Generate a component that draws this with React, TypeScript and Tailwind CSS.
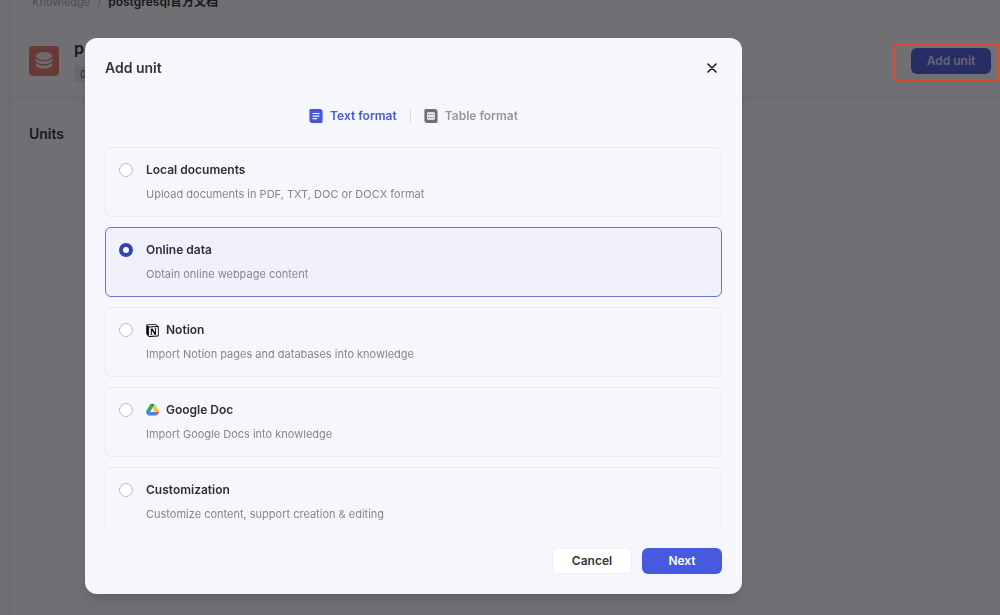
import { useState, type ReactNode } from 'react'
import { SiNotion } from 'react-icons/si'

function GoogleDriveIcon() {
  return (
    <svg viewBox="0 0 87.3 78" className="w-[13px]" aria-hidden="true">
      <path fill="#3f7ae0" d="m6.6 66.85 3.85 6.65c.8 1.4 1.95 2.5 3.3 3.3l13.75-23.8h-27.5c0 1.55.4 3.1 1.2 4.5z" />
      <path fill="#3fa55a" d="m43.65 25-13.75-23.8c-1.35.8-2.5 1.9-3.3 3.3l-25.4 44a9.06 9.06 0 0 0 -1.2 4.5h27.5z" />
      <path fill="#e0523f" d="m73.55 76.8c1.35-.8 2.5-1.9 3.3-3.3l1.6-2.75 7.65-13.25c.8-1.4 1.2-2.95 1.2-4.5h-27.502l5.852 11.5z" />
      <path fill="#2c8443" d="m43.65 25 13.75-23.8c-1.35-.8-2.9-1.2-4.5-1.2h-18.5c-1.6 0-3.15.45-4.5 1.2z" />
      <path fill="#3f7ff0" d="m59.8 53h-32.3l-13.75 23.8c1.35.8 2.9 1.2 4.5 1.2h50.8c1.6 0 3.15-.45 4.5-1.2z" />
      <path fill="#f5c03c" d="m73.4 26.5-12.7-22c-.8-1.4-1.95-2.5-3.3-3.3l-13.75 23.8 16.15 28h27.45c0-1.55-.4-3.1-1.2-4.5z" />
    </svg>
  )
}

function TextFormatIcon() {
  return (
    <svg viewBox="0 0 14 14" className="size-3.5" aria-hidden="true">
      <path fill="currentColor" d="M1.7 0h9a2.9 2.9 0 0 1 2.9 2.9v9.5A1.6 1.6 0 0 1 12 14H3.3A2.9 2.9 0 0 1 .4 11.1V1.3A1.3 1.3 0 0 1 1.7 0z" />
      <path stroke="#f6f7fc" strokeWidth="1.2" strokeLinecap="round" d="M4 4.5h6M4 7.1h6M4 9.7h3.6" />
    </svg>
  )
}

function TableFormatIcon() {
  return (
    <svg viewBox="0 0 14 14" className="size-3.5" aria-hidden="true">
      <path fill="currentColor" d="M1.7 0h9a2.9 2.9 0 0 1 2.9 2.9v9.5A1.6 1.6 0 0 1 12 14H3.3A2.9 2.9 0 0 1 .4 11.1V1.3A1.3 1.3 0 0 1 1.7 0z" />
      <rect x="3.2" y="3.2" width="7.6" height="7.6" rx="1" fill="#f6f7fc" />
      <g fill="currentColor">
        <rect x="4.2" y="4.8" width="1.2" height="1.4" />
        <rect x="6.4" y="4.8" width="1.2" height="1.4" />
        <rect x="8.6" y="4.8" width="1.2" height="1.4" />
        <rect x="4.2" y="7.8" width="1.2" height="1.4" />
        <rect x="6.4" y="7.8" width="1.2" height="1.4" />
        <rect x="8.6" y="7.8" width="1.2" height="1.4" />
      </g>
    </svg>
  )
}

function DatabaseIcon() {
  return (
    <svg viewBox="0 0 30 30" className="size-[30px]" aria-hidden="true">
      <rect width="30" height="30" rx="4" fill="#e0705c" />
      <g fill="#eeeaea">
        <ellipse cx="15" cy="10" rx="8.2" ry="4" />
        <path d="M6.8 12.2c1.2 2 4.4 3.1 8.2 3.1s7-1.1 8.2-3.1v2.1c0 2.1-3.7 3.9-8.2 3.9s-8.2-1.8-8.2-3.9z" />
        <path d="M6.8 16.4c1.2 2 4.4 3.2 8.2 3.2s7-1.2 8.2-3.2v2.3c0 2.1-3.7 3.9-8.2 3.9s-8.2-1.8-8.2-3.9z" />
      </g>
    </svg>
  )
}

type Source = {
  id: string
  title: string
  description: string
  icon?: ReactNode
}

const sources: Source[] = [
  { id: 'local', title: 'Local documents', description: 'Upload documents in PDF, TXT, DOC or DOCX format' },
  { id: 'online', title: 'Online data', description: 'Obtain online webpage content' },
  { id: 'notion', title: 'Notion', description: 'Import Notion pages and databases into knowledge', icon: <SiNotion className="size-[13px] text-black" /> },
  { id: 'google', title: 'Google Doc', description: 'Import Google Docs into knowledge', icon: <GoogleDriveIcon /> },
  { id: 'custom', title: 'Customization', description: 'Customize content, support creation & editing' },
]

function KnowledgePage() {
  return (
    <div className="flex h-screen overflow-hidden bg-[#f7f7fa] text-[#1d1c23]">
      <aside className="w-2.5 shrink-0 border-r border-[#dcdce4]" />
      <main className="min-w-0 flex-1">
        <nav className="-mt-2 flex h-5 items-center gap-[7px] pl-[22px] text-[11px]">
          <a href="#knowledge" className="text-[#a0a0a8]">Knowledge</a>
          <span className="text-[#a0a0a8]">/</span>
          <span className="text-xs font-semibold">postgresql官方文档</span>
        </nav>
        <header className="flex h-[86px] items-center gap-[15px] border-b border-[#e2e2e7] pr-[9px] pl-[19px] pt-3">
          <DatabaseIcon />
          <div className="flex-1">
            <h1 className="text-base leading-5 font-semibold">postgresql官方文档</h1>
            <span className="mt-2 inline-block rounded bg-[#e6e6e9] px-1.5 text-[10px] leading-4 text-[#55555e]">0 Byte</span>
          </div>
          <button type="button" className="h-[26px] w-20 rounded-md bg-[#4750d8] text-xs font-semibold text-[#dcdcf0]">Add unit</button>
        </header>
        <h2 className="px-[19px] pt-6 text-sm leading-6 font-semibold">Units</h2>
      </main>
    </div>
  )
}

function SourceCard({ source, checked, onChange }: { source: Source; checked: boolean; onChange: () => void }) {
  return (
    <label
      className={
        checked
          ? 'flex shrink-0 cursor-pointer gap-[13px] rounded-md border border-[#6a74cc] bg-[#f1f1fc] px-[13px] py-3'
          : 'flex shrink-0 cursor-pointer gap-[13px] rounded-md border border-[#e9eaef] px-[13px] py-3'
      }
    >
      <input
        type="radio"
        name="source"
        checked={checked}
        onChange={onChange}
        className="mt-[3px] size-3.5 shrink-0 appearance-none rounded-full border border-[#bcbcc4] bg-white checked:border-4 checked:border-[#3442b4]"
      />
      <div>
        <div className="flex h-5 items-center gap-[7px] text-xs font-semibold text-[#2e2f36]">
          {source.icon}
          {source.title}
        </div>
        <p className="mt-1 text-[11px] leading-5 text-[#85868e]">{source.description}</p>
      </div>
    </label>
  )
}

function AddUnitModal() {
  const [selected, setSelected] = useState('online')

  return (
    <div className="fixed inset-0 flex bg-[#16161a]/60 pt-[38px] pr-[258px] pb-[21px] pl-[85px]">
      <div role="dialog" aria-labelledby="add-unit-title" className="flex min-w-0 flex-1 flex-col rounded-xl bg-[#f6f7fc] px-5 shadow-lg">
        <div className="flex h-[60px] shrink-0 items-center justify-between">
          <h2 id="add-unit-title" className="text-sm font-semibold text-[#34353c]">Add unit</h2>
          <button type="button" aria-label="Close" className="flex size-5 items-center justify-center text-[#1d1c23]">
            <svg viewBox="0 0 10 10" className="size-2.5" fill="none" stroke="currentColor" strokeWidth="1.6" strokeLinecap="round">
              <path d="M1 1l8 8M9 1L1 9" />
            </svg>
          </button>
        </div>
        <div className="flex h-9 shrink-0 items-center justify-center text-xs font-semibold">
          <button type="button" className="flex items-center gap-[7px] text-[#4558dc]">
            <TextFormatIcon />
            Text format
          </button>
          <span className="mx-[13px] h-3.5 w-px bg-[#dddde3]" />
          <button type="button" className="flex items-center gap-[7px] text-[#96969c]">
            <span className="text-[#6f6f74]"><TableFormatIcon /></span>
            Table format
          </button>
        </div>
        <div className="mt-[13px] flex min-h-0 flex-1 flex-col gap-2.5 overflow-y-auto [scrollbar-width:none]">
          {sources.map((source) => (
            <SourceCard
              key={source.id}
              source={source}
              checked={selected === source.id}
              onChange={() => setSelected(source.id)}
            />
          ))}
        </div>
        <div className="flex shrink-0 justify-end gap-2.5 py-5 text-xs font-semibold">
          <button type="button" className="h-[26px] w-20 rounded-md border border-[#f0f0f4] bg-white text-[#34353c]">Cancel</button>
          <button type="button" className="h-[26px] w-20 rounded-md bg-[#465adf] text-white">Next</button>
        </div>
      </div>
    </div>
  )
}

export default function App() {
  return (
    <div className="font-['Inter','Noto_Sans_CJK_SC',sans-serif] antialiased">
      <KnowledgePage />
      <AddUnitModal />
      <div className="pointer-events-none fixed top-[43px] right-0 h-[38px] w-[106px] rounded-xs border-2 border-[#dc4a30]" />
    </div>
  )
}
